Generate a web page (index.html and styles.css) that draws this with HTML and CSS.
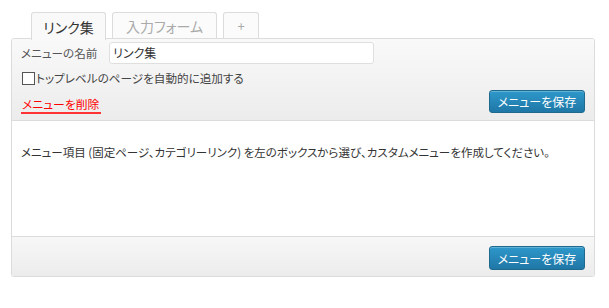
FILE: index.html
```html
<!DOCTYPE html>
<html lang="ja">
<head>
<meta charset="utf-8">
<link rel="stylesheet" href="styles.css">
</head>
<body>
<div class="wrap">
  <div class="tabs">
    <div class="tab tab-active">リンク集</div>
    <div class="tab tab-form">入力フォーム</div>
    <div class="tab tab-plus">+</div>
  </div>
  <div class="panel">
    <div class="head">
      <div class="row row-name">
        <span class="label">メニューの名前</span>
        <div class="input">リンク集</div>
      </div>
      <div class="row row-check">
        <span class="checkbox"></span>
        <span class="check-label">トップレベルのページを自動的に追加する</span>
      </div>
      <div class="row row-actions">
        <span class="delete">メニューを削除</span>
        <span class="btn">メニューを保存</span>
      </div>
    </div>
    <div class="body">
      <p class="msg">メニュー項目 (固定ページ、カテゴリーリンク) を左のボックスから選び、カスタムメニューを作成してください。</p>
    </div>
    <div class="foot">
      <span class="btn">メニューを保存</span>
    </div>
  </div>
</div>
</body>
</html>
```

FILE: styles.css
```css
* { box-sizing: border-box; }
html, body { margin: 0; padding: 0; background: #fff; }
body {
  font-family: "Noto Sans CJK JP", "Liberation Sans", sans-serif;
  font-feature-settings: "palt";
  font-size: 12px;
  color: #333;
}
.wrap {
  width: 595px;
  padding: 12px 0 0 11px;
}
.tabs {
  display: flex;
  gap: 6px;
  padding-left: 20px;
  height: 27px;
  position: relative;
  z-index: 1;
  margin-bottom: -1px;
}
.tab {
  height: 27px;
  border: 1px solid #dcdcdc;
  border-bottom: none;
  border-radius: 3px 3px 0 0;
  background: #f7f7f7;
  display: flex;
  align-items: center;
  justify-content: center;
  font-size: 14px;
  color: #aaa;
}
.tab-active {
  width: 75px;
  height: 28px;
  background: #f9f9f9;
  color: #333;
}
.tab-form { width: 105px; height: 26px; background: #fbfbfb; }
.tab-plus { width: 36px; height: 26px; background: #fbfbfb; font-size: 13px; }
.panel {
  width: 584px;
  border: 1px solid #dcdcdc;
  border-radius: 3px;
  box-shadow: 0 1px 1px rgba(0,0,0,0.06);
  overflow: hidden;
}
.head {
  background: linear-gradient(#f9f9f9, #ececec);
  border-bottom: 1px solid #dcdcdc;
  padding: 3px 9px 6px 9px;
  height: 82px;
}
.row { display: flex; align-items: center; }
.row-name { height: 22px; }
.label { width: 88px; color: #555; font-size: 11.6px; }
.input {
  width: 265px;
  height: 22px;
  border: 1px solid #dfdfdf;
  border-radius: 3px;
  background: #fff;
  padding-left: 3px;
  line-height: 20px;
  color: #333;
}
.row-check { height: 16px; margin-top: 6px; padding-left: 1px; }
.checkbox {
  width: 13px;
  height: 13px;
  border: 1px solid #555;
  background: #fff;
  margin-right: 1px;
}
.check-label { color: #444; font-size: 11.6px; }
.row-actions {
  height: 23px;
  margin-top: 4px;
  justify-content: space-between;
}
.delete {
  color: #f00;
  border-bottom: 2px solid #f33;
  line-height: 14px;
  padding: 0 2px 1px 1px;
  margin-top: 8px;
  font-size: 11.8px;
}
.btn {
  display: inline-flex;
  align-items: center;
  justify-content: center;
  width: 96px;
  height: 23px;
  border: 1px solid #1e6a8f;
  border-radius: 3px;
  background: linear-gradient(#2e98cb, #1f77a6);
  color: #fff;
  box-shadow: inset 0 1px 0 rgba(255,255,255,0.25);
}
.body {
  background: #fff;
  height: 116px;
  padding: 22px 0 0 9px;
  border-bottom: 1px solid #dcdcdc;
}
.msg {
  margin: 0;
  line-height: 18px;
  color: #333;
  font-size: 11.5px;
}
.foot {
  background: linear-gradient(#f7f7f7, #ececec);
  height: 39px;
  padding: 9px 9px 0 0;
  display: flex;
  justify-content: flex-end;
  align-items: flex-start;
}
.foot .btn { height: 24px; }
```
